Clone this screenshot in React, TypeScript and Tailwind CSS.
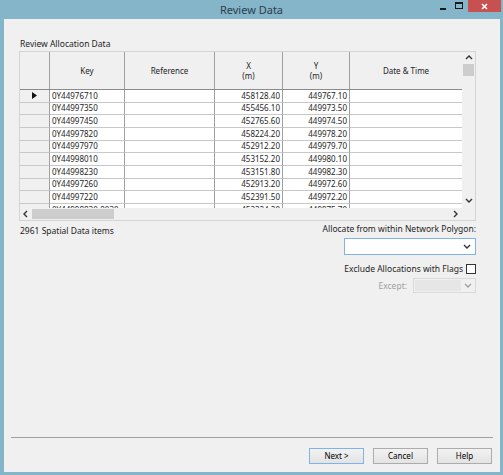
const rows = [
  ['0Y44976710', '458128.40', '449767.10'],
  ['0Y44997350', '455456.10', '449973.50'],
  ['0Y44997450', '452765.60', '449974.50'],
  ['0Y44997820', '458224.20', '449978.20'],
  ['0Y44997970', '452912.20', '449979.70'],
  ['0Y44998010', '453152.20', '449980.10'],
  ['0Y44998230', '453151.80', '449982.30'],
  ['0Y44997260', '452913.20', '449972.60'],
  ['0Y44997220', '452391.50', '449972.20'],
  ['0Y44998830-8030', '453224.20', '449975.70'],
];

function Chevron({ dir, color = '#333' }: { dir: 'up' | 'down' | 'left' | 'right'; color?: string }) {
  const d = {
    up: 'M1 5 L4 2 L7 5',
    down: 'M1 2 L4 5 L7 2',
    left: 'M5 1 L2 4 L5 7',
    right: 'M2 1 L5 4 L2 7',
  }[dir];
  return (
    <svg width="8" height="8" viewBox="0 0 8 8">
      <path d={d} fill="none" stroke={color} strokeWidth="1.4" />
    </svg>
  );
}

function Button({ label, primary }: { label: string; primary?: boolean }) {
  return (
    <div
      className={`h-[16px] w-[55px] flex items-center justify-center text-[8px] text-black bg-gradient-to-b from-[#f2f2f2] to-[#e3e3e3] border ${
        primary ? 'border-[#7eb4ea]' : 'border-[#acacac]'
      }`}
    >
      {label}
    </div>
  );
}

export default function App() {
  return (
    <div
      className="w-[503px] h-[475px] bg-[#84b5c9] flex flex-col overflow-hidden"
      style={{ fontFamily: '"Noto Sans", "Open Sans", sans-serif' }}
    >
      {/* Title bar */}
      <div className="h-[19px] relative flex items-center justify-center">
        <span className="text-[11px] text-[#2d3e4e] leading-none">Review Data</span>
        <div className="absolute top-0 right-[2px] flex items-start">
          <div className="w-[14px] h-[12px] relative">
            <div className="absolute left-[4px] top-[8px] w-[6px] h-[2px] bg-[#1a1a1a]" />
          </div>
          <div className="w-[14px] h-[12px] relative mx-[2px]">
            <div className="absolute left-[3px] top-[2px] w-[8px] h-[7px] border border-[#1a1a1a] border-t-2" />
          </div>
          <div className="w-[33px] h-[12px] bg-[#c75050] flex items-center justify-center">
            <svg width="7" height="7" viewBox="0 0 7 7">
              <path d="M1 1 L6 6 M6 1 L1 6" stroke="#fff" strokeWidth="1.6" />
            </svg>
          </div>
        </div>
      </div>

      {/* Client area */}
      <div className="flex-1 ml-[4px] mr-[3px] mb-[3px] bg-[#f0f0f0] flex flex-col text-[#1e1e1e]">
        <div className="pl-[16px] pt-[19px] h-[32px] text-[8.5px] leading-[12px]">Review Allocation Data</div>

        {/* Grid */}
        <div className="ml-[15px] w-[457px] h-[170px] border border-[#d4d4d4] bg-[#f0f0f0] flex flex-col">
          <div className="flex h-[156px]">
            <div className="w-[442px] overflow-hidden flex flex-col">
              {/* header */}
              <div className="flex h-[38px] shrink-0 border-b border-[#8a8a8a] bg-[#f0f0f0] text-[8px]">
                <div className="w-[30px] border-r border-[#a0a0a0]" />
                <div className="w-[75px] border-r border-[#a0a0a0] flex items-center justify-center">Key</div>
                <div className="w-[90px] border-r border-[#a0a0a0] flex items-center justify-center">Reference</div>
                <div className="w-[68px] border-r border-[#a0a0a0] flex flex-col items-center justify-center leading-[10px]">
                  <span>X</span>
                  <span>(m)</span>
                </div>
                <div className="w-[67px] border-r border-[#a0a0a0] flex flex-col items-center justify-center leading-[10px]">
                  <span>Y</span>
                  <span>(m)</span>
                </div>
                <div className="flex-1 flex items-center justify-center">Date &amp; Time</div>
              </div>
              {/* rows */}
              {rows.map((r, i) => (
                <div key={i} className="flex h-[12.67px] shrink-0 text-[8px] leading-none">
                  <div className="w-[30px] shrink-0 bg-[#f0f0f0] border-r border-b border-[#a0a0a0] border-b-[#c8c8c8] flex items-center justify-center">
                    {i === 0 && (
                      <svg width="5" height="7" viewBox="0 0 5 7">
                        <path d="M0 0 L5 3.5 L0 7 Z" fill="#111" />
                      </svg>
                    )}
                  </div>
                  <div className="w-[75px] shrink-0 bg-white border-r border-b border-[#a0a0a0] border-b-[#c8c8c8] flex items-center pl-[2px]">
                    {r[0]}
                  </div>
                  <div className="w-[90px] shrink-0 bg-white border-r border-b border-[#a0a0a0] border-b-[#c8c8c8]" />
                  <div className="w-[68px] shrink-0 bg-white border-r border-b border-[#a0a0a0] border-b-[#c8c8c8] flex items-center justify-end pr-[2px]">
                    {r[1]}
                  </div>
                  <div className="w-[67px] shrink-0 bg-white border-r border-b border-[#a0a0a0] border-b-[#c8c8c8] flex items-center justify-end pr-[2px]">
                    {r[2]}
                  </div>
                  <div className="flex-1 bg-white border-b border-[#c8c8c8]" />
                </div>
              ))}
            </div>
            {/* vertical scrollbar */}
            <div className="w-[13px] bg-[#f0f0f0] flex flex-col items-center">
              <div className="h-[12px] flex items-center justify-center">
                <Chevron dir="up" />
              </div>
              <div className="w-[11px] h-[12px] bg-[#cdcdcd]" />
              <div className="flex-1" />
              <div className="h-[14px] flex items-center justify-center">
                <Chevron dir="down" />
              </div>
            </div>
          </div>
          {/* horizontal scrollbar */}
          <div className="flex h-[12px] items-center">
            <div className="w-[442px] h-full flex items-center">
              <div className="w-[12px] flex items-center justify-center">
                <Chevron dir="left" />
              </div>
              <div className="w-[82px] h-[10px] bg-[#cdcdcd]" />
              <div className="flex-1" />
              <div className="w-[12px] flex items-center justify-center">
                <Chevron dir="right" />
              </div>
            </div>
          </div>
        </div>

        {/* below grid */}
        <div className="flex justify-between pl-[16px] pr-[24px] text-[8.5px] leading-[12px]">
          <div className="mt-[4px]">2961 Spatial Data items</div>
          <div className="flex flex-col items-end mt-[2px]">
            <div>Allocate from within Network Polygon:</div>
            <div className="mt-[3px] w-[132px] h-[17px] bg-white border border-[#7eb4ea] flex items-center justify-end pr-[4px]">
              <Chevron dir="down" />
            </div>
            <div className="mt-[8px] flex items-center gap-[3px]">
              <span>Exclude Allocations with Flags</span>
              <div className="w-[10px] h-[10px] bg-white border border-[#333]" />
            </div>
            <div className="mt-[3px] flex items-center gap-[6px]">
              <span className="text-[#a0a0a0]">Except:</span>
              <div className="w-[63px] h-[15px] border border-[#d9d9d9] bg-[#f0f0f0] flex items-center p-[1px]">
                <div className="w-[46px] h-full bg-[#e6e6e6]" />
                <div className="flex-1 flex items-center justify-center">
                  <Chevron dir="down" color="#a0a0a0" />
                </div>
              </div>
            </div>
          </div>
        </div>

        <div className="flex-1" />

        {/* footer */}
        <div className="mx-[7px] border-t border-[#a0a0a0]" />
        <div className="flex justify-end gap-[9px] pr-[8px] mt-[10px] mb-[8px]">
          <Button label="Next >" primary />
          <Button label="Cancel" />
          <Button label="Help" />
        </div>
      </div>
    </div>
  );
}
